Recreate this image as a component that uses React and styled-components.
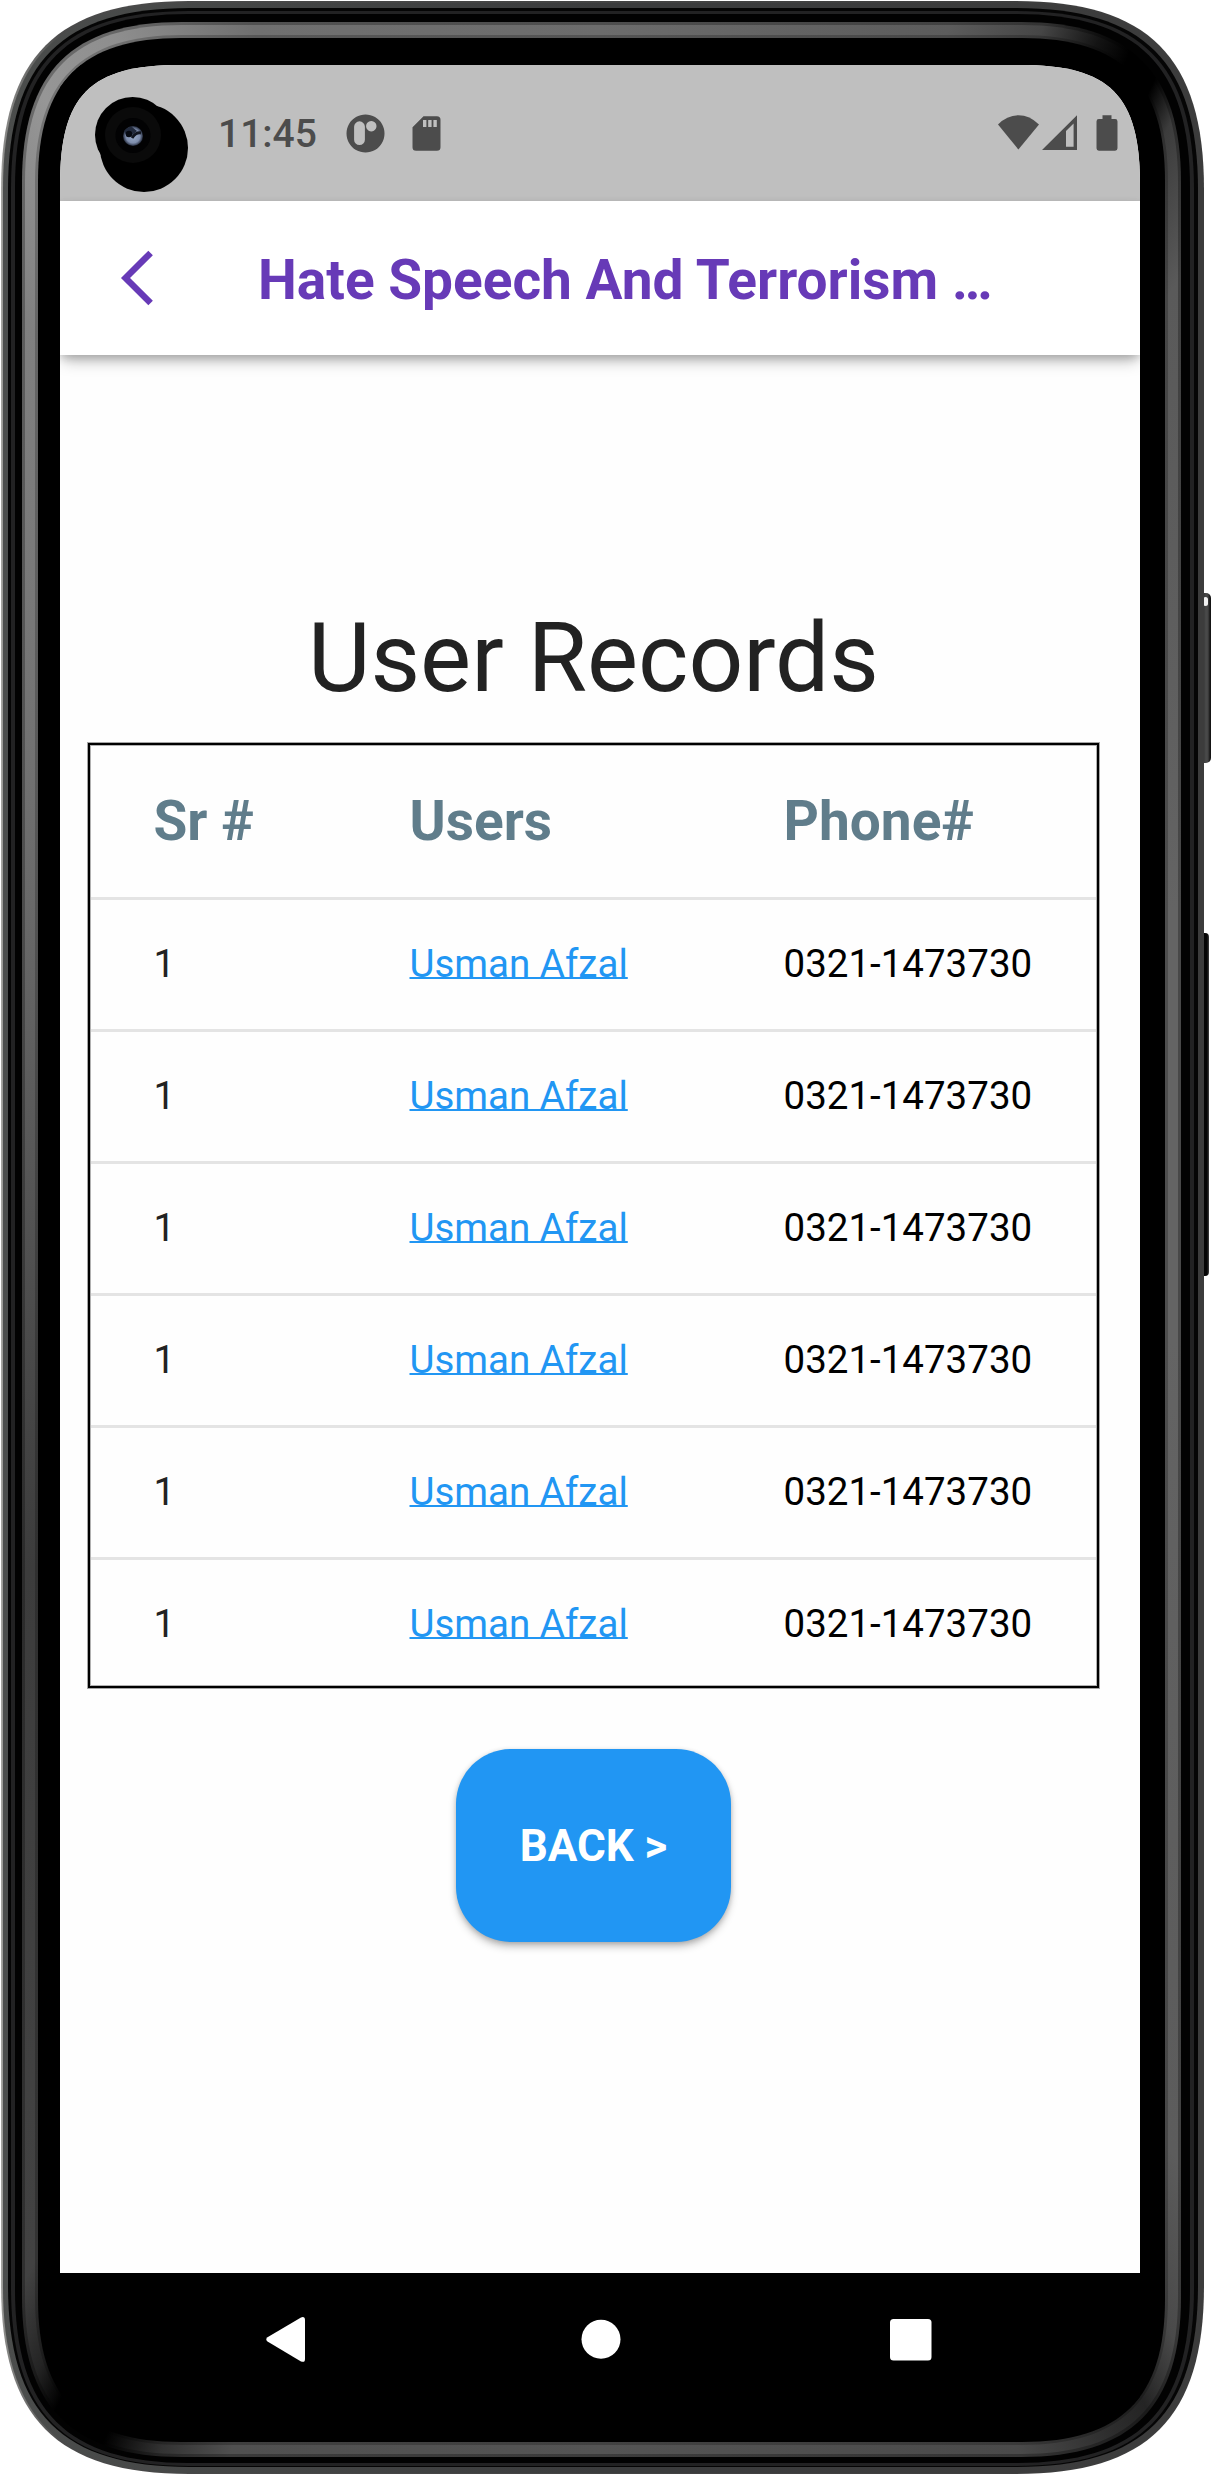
import React from "react";
import styled, { createGlobalStyle } from "styled-components";

const Global = createGlobalStyle`
  *, *::before, *::after { box-sizing: border-box; }
  html, body { margin: 0; padding: 0; background: #fff; }
  body { font-family: Roboto, "Open Sans", sans-serif; }
`;

/* Continuous-curvature rounded rectangle, as used by the phone's shell. */
const squircle = (w, h, r, c) =>
  `path("M0 ${r}C0 ${c} ${c} 0 ${r} 0H${w - r}C${w - c} 0 ${w} ${c} ${w} ${r}V${h - r}C${w} ${h - c} ${w - c} ${h} ${w - r} ${h}H${r}C${c} ${h} 0 ${h - c} 0 ${h - r}Z")`;

const sheen = (k) => {
  const g = (v) => `rgb(${Math.round(v * k)},${Math.round(v * k)},${Math.round(v * k)})`;
  return `conic-gradient(${g(108)} 0deg, ${g(92)} 16deg, ${g(70)} 20deg, ${g(20)} 22.5deg, ${g(0)} 24deg, ${g(0)} 25.5deg, ${g(60)} 27deg, ${g(90)} 31deg, ${g(100)} 60deg, ${g(100)} 100deg, ${g(92)} 148deg, ${g(74)} 152.5deg, ${g(36)} 155deg, ${g(46)} 157deg, ${g(74)} 161deg, ${g(84)} 180deg, ${g(80)} 197deg, ${g(50)} 200deg, ${g(0)} 202.5deg, ${g(0)} 205deg, ${g(36)} 206.5deg, ${g(66)} 209deg, ${g(60)} 240deg, ${g(92)} 285deg, ${g(128)} 328deg, ${g(150)} 334deg, ${g(142)} 338deg, ${g(112)} 344deg, ${g(108)} 360deg)`;
};

/* Edges of each nested shell layer: left, top, right, bottom. */
const shell = [
  { box: [1, 1, 1204, 2474], r: 188, c: 56, fill: "linear-gradient(90deg,#a9a9a5 0,#8a8a88 3px,#4a4a4a 60px,#3c3c3c)" },
  { box: [3, 3, 1203, 2473], r: 186, c: 56, fill: "linear-gradient(90deg,#4b4d4c 0,#3b3c3d 50%,#3c3c3c 100%)" },
  { box: [8, 8, 1198, 2467], r: 182, c: 54, fill: "#050505" },
  { box: [11, 11, 1194, 2466], r: 178, c: 53, fill: "#222223" },
  { box: [15, 14, 1190, 2463], r: 174, c: 52, fill: "#020202" },
  { box: [22, 22, 1181, 2457], r: 160, c: 50, fill: sheen(0.72) },
  { box: [25, 25, 1178, 2454], r: 157, c: 49, fill: sheen(1) },
  { box: [35, 35, 1168, 2445], r: 147, c: 46, fill: sheen(0.78) },
  { box: [38, 38, 1165, 2442], r: 143, c: 44, fill: "#000" },
];

const Stage = styled.div`
  display: flex;
  align-items: flex-start;
  width: 1211px;
  height: 2474px;
  padding: 1px 0 0 1px;
  overflow: hidden;
  background: #fff;
`;

const Layer = styled.div`
  flex: none;
  width: ${(p) => p.$w}px;
  height: ${(p) => p.$h}px;
  padding: ${(p) => p.$pad};
  background: ${(p) => p.$fill};
  clip-path: ${(p) => squircle(p.$w, p.$h, p.$r, p.$c)};
`;

const SideKeys = styled.div`
  display: flex;
  flex-direction: column;
  align-items: flex-start;
  gap: 170px;
  margin-left: -1px;
  padding-top: 592px;
`;

const PowerKey = styled.div`
  width: 8px;
  height: 170px;
  padding: 4px 2px 0 0;
  border-radius: 0 5px 5px 0;
  background: linear-gradient(90deg, #333 0, #4a4b4b 3px, #444 5px, #151515 7px);

  &::before {
    content: "";
    display: block;
    width: 5px;
    height: 9px;
    border-radius: 3px;
    background: #f2f2f2;
  }
`;

const VolumeKey = styled.div`
  width: 6px;
  height: 343px;
  border-radius: 0 4px 4px 0;
  background: linear-gradient(90deg, #050505 0, #050505 4px, #444 6px);
`;

const Display = styled.div`
  display: flex;
  flex-direction: column;
  width: 1080px;
  height: 2340px;
  background: #000;
`;

const Screen = styled.div`
  display: flex;
  flex-direction: column;
  height: 2208px;
  background: #fefefe;
  clip-path: path("M0 120C0 30 30 0 120 0H960C1050 0 1080 30 1080 120V2208H0Z");
`;

const StatusBar = styled.div`
  display: flex;
  align-items: flex-start;
  flex: none;
  height: 136px;
  padding: 32px 22px 0 35px;
  background: #bfbfbf;
`;

const CameraIcon = styled.svg`
  flex: none;
  width: 94px;
  height: 96px;
`;

const Clock = styled.div`
  width: 99px;
  margin: 14px 0 0 29px;
  color: #4c4c4c;
  font-size: 39px;
  font-weight: 500;
  line-height: 46px;
  white-space: nowrap;
`;

const StatusIcon = styled.svg`
  flex: none;
  width: ${(p) => p.$w}px;
  height: 40px;
  margin: 17px 0 0 ${(p) => p.$gap}px;
  fill: #4c4c4c;
`;

const Spacer = styled.div`
  flex: 1;
`;

const AppBar = styled.header`
  display: flex;
  align-items: center;
  flex: none;
  height: 154px;
  padding-left: 58px;
  background: #fff;
  box-shadow: 0 9px 14px -3px rgba(0, 0, 0, 0.26), 0 3px 8px rgba(0, 0, 0, 0.16);
`;

const BackIcon = styled.svg`
  flex: none;
  width: 40px;
  height: 60px;
`;

const AppTitle = styled.h1`
  margin: 4px 0 0 100px;
  color: #673ab7;
  font-size: 55px;
  font-weight: 700;
  line-height: 64px;
  white-space: nowrap;
`;

const Body = styled.main`
  display: flex;
  flex: 1;
  flex-direction: column;
  align-items: center;
  padding: 247px 40px 0 27px;
`;

const Heading = styled.h2`
  margin: 0 0 28px;
  color: #222;
  font-size: 96.25px;
  font-weight: 400;
  line-height: 112px;
  white-space: nowrap;
`;

const Table = styled.div`
  width: 1011px;
  height: 945px;
  margin-top: 1px;
  border: 2px solid #000;
  box-shadow: 0 0 0 1px rgba(0, 0, 0, 0.35), inset 0 0 0 1px rgba(0, 0, 0, 0.3);
  color: #222;
  font-size: 38.5px;
`;

const Row = styled.div`
  display: grid;
  grid-template-columns: 256px 374px 1fr;
  align-items: center;
  height: ${(p) => (p.$head ? 152 : 132)}px;
  margin: 0 1px;
  padding: 0 0 ${(p) => (p.$head ? 0 : 2)}px 62.5px;
  border-top: ${(p) => (p.$head ? "none" : "3px solid #e4e4e4")};
  line-height: 46px;
  white-space: nowrap;
`;

const HeadCell = styled.div`
  color: #607d8b;
  font-size: 55px;
  font-weight: 700;
  line-height: 64px;
`;

const UserLink = styled.span`
  color: #2196f3;
  text-decoration: underline;
  text-decoration-thickness: 2px;
  text-underline-offset: 0;
  text-decoration-skip-ink: none;
`;

const Phone = styled.span`
  color: #000;
`;

const BackButton = styled.button`
  width: 275px;
  height: 193px;
  margin-top: 61px;
  padding: 0;
  border: 0;
  border-radius: 55px;
  background: #2196f3;
  box-shadow: 0 5px 8px -1px rgba(0, 0, 0, 0.28), 0 1px 5px rgba(0, 0, 0, 0.14);
  color: #fff;
  font: 700 44px/52px Roboto, sans-serif;
`;

const NavBar = styled.nav`
  display: flex;
  align-items: center;
  justify-content: space-between;
  height: 132px;
  padding: 0 208px 0 205px;
`;

const NavIcon = styled.svg`
  width: 44px;
  height: 48px;
  fill: #fff;
`;

const rows = Array.from({ length: 6 }, (_, id) => ({
  id,
  serial: "1",
  user: "Usman Afzal",
  phone: "0321-1473730",
}));

function Shell({ children, index = 0 }) {
  const { box, r, c, fill } = shell[index];
  const next = shell[index + 1];
  const inner = next ? next.box : [60, 65, 1140, 2405];
  return (
    <Layer
      $w={box[2] - box[0]}
      $h={box[3] - box[1]}
      $r={r}
      $c={c}
      $fill={fill}
      $pad={`${inner[1] - box[1]}px 0 0 ${inner[0] - box[0]}px`}
    >
      {next ? <Shell index={index + 1}>{children}</Shell> : children}
    </Layer>
  );
}

function Camera() {
  return (
    <CameraIcon viewBox="95 97 94 96">
      <defs>
        <radialGradient id="lens">
          <stop offset="0" stopColor="#9db0cc" />
          <stop offset="0.7" stopColor="#7d8cab" />
          <stop offset="1" stopColor="#242b3c" />
        </radialGradient>
      </defs>
      <circle cx="132.7" cy="134.7" r="37.7" />
      <circle cx="144" cy="148" r="44" />
      <circle cx="133" cy="135" r="28" fill="#0a0a0a" />
      <circle cx="133" cy="135.5" r="17.5" fill="#020203" />
      <circle cx="133" cy="136" r="10" fill="url(#lens)" />
      <path d="M124 131q5-5 8-4l5 4q-5 5-10 6z" fill="#222a3c" />
      <path d="M132 138q4-6 9-5" stroke="#11151f" strokeWidth="3" fill="none" />
      <circle cx="129" cy="134" r="3.2" fill="#070a12" />
    </CameraIcon>
  );
}

export default function App() {
  return (
    <>
      <Global />
      <Stage>
        <Shell>
          <Display>
            <Screen>
              <StatusBar>
                <Camera />
                <Clock>11:45</Clock>
                <StatusIcon $w={40} $gap={28} viewBox="345 114 40 40">
                  <path
                    fillRule="evenodd"
                    d="M365.5 114.5a19 19 0 1 0 .01 0ZM359.5 121.3a5.4 5.4 0 0 1 5.4 5.4v13a5.4 5.4 0 0 1-10.8 0v-13a5.4 5.4 0 0 1 5.4-5.4ZM371.3 121a5.2 5.2 0 1 1-.01 0Z"
                  />
                </StatusIcon>
                <StatusIcon $w={30} $gap={27} viewBox="412 114 30 40">
                  <path
                    fillRule="evenodd"
                    d="M423.5 116.2h13.4a3.6 3.6 0 0 1 3.6 3.6v27.4a3.6 3.6 0 0 1-3.6 3.6h-20.8a3.6 3.6 0 0 1-3.6-3.6v-20ZM423 120v7h3.4v-7ZM428.2 120v7h3.4v-7ZM433.4 120v7h3.4v-7Z"
                  />
                </StatusIcon>
                <Spacer />
                <StatusIcon $w={42} $gap={0} viewBox="998 114 42 40">
                  <path d="M998 124.5Q1007 115.2 1018.4 115.2T1039 124.5L1018.4 149.6Z" />
                </StatusIcon>
                <StatusIcon $w={36} $gap={2} viewBox="1042 114 36 40">
                  <path
                    fillRule="evenodd"
                    d="M1042 150L1077 115.2V150ZM1066 131V146.8H1073.6V123.4Z"
                  />
                </StatusIcon>
                <StatusIcon $w={22} $gap={18} viewBox="1096.5 114 22 40">
                  <path d="M1103 115.3h9v3.7h3.6a2.4 2.4 0 0 1 2.4 2.4v26.9a2.4 2.4 0 0 1-2.4 2.4h-16.2a2.4 2.4 0 0 1-2.4-2.4v-26.9a2.4 2.4 0 0 1 2.4-2.4h3.6Z" />
                </StatusIcon>
              </StatusBar>
              <AppBar>
                <BackIcon viewBox="118 248 40 60">
                  <path
                    d="M150.6 252.9L125.5 278L150.6 303.1"
                    fill="none"
                    stroke="#673ab7"
                    strokeWidth="6.4"
                  />
                </BackIcon>
                <AppTitle>Hate Speech And Terrorism …</AppTitle>
              </AppBar>
              <Body>
                <Heading>User Records</Heading>
                <Table>
                  <Row $head>
                    <HeadCell>Sr #</HeadCell>
                    <HeadCell>Users</HeadCell>
                    <HeadCell>Phone#</HeadCell>
                  </Row>
                  {rows.map((row) => (
                    <Row key={row.id}>
                      <span>{row.serial}</span>
                      <UserLink>{row.user}</UserLink>
                      <Phone>{row.phone}</Phone>
                    </Row>
                  ))}
                </Table>
                <BackButton>BACK &gt;</BackButton>
              </Body>
            </Screen>
            <NavBar>
              <NavIcon viewBox="265 2315 44 48">
                <path d="M267.5 2337.2L301 2317.4Q305 2316.2 305 2320V2359Q305 2363 301 2361.4L267.5 2341.6Q265 2339.4 267.5 2337.2Z" />
              </NavIcon>
              <NavIcon viewBox="576 2315 44 48">
                <circle cx="600" cy="2339.3" r="19.5" />
              </NavIcon>
              <NavIcon viewBox="888 2315 44 48">
                <rect x="890" y="2319" width="41.5" height="41.5" rx="3.5" />
              </NavIcon>
            </NavBar>
          </Display>
        </Shell>
        <SideKeys>
          <PowerKey />
          <VolumeKey />
        </SideKeys>
      </Stage>
    </>
  );
}
